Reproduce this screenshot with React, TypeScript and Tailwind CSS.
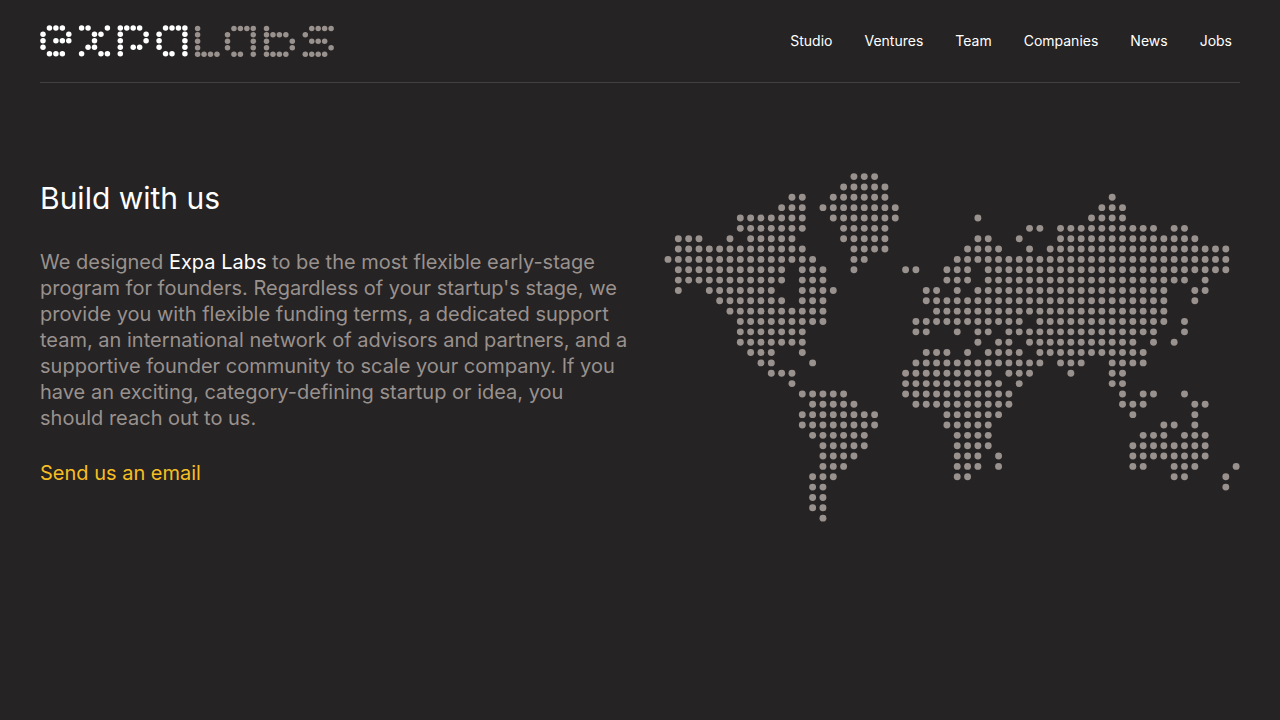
import { Fragment } from "react";

type Range = [number, number];

const MAP_ROWS: Range[][] = [
  [[18, 20]],
  [[17, 21]],
  [[12, 13], [16, 21], [43, 43]],
  [[11, 13], [15, 22], [42, 44]],
  [[7, 13], [16, 22], [30, 30], [41, 44]],
  [[7, 13], [17, 21], [35, 36], [38, 47], [49, 50]],
  [[1, 3], [6, 6], [8, 12], [17, 21], [30, 31], [34, 34], [38, 51]],
  [[1, 13], [18, 21], [29, 32], [35, 35], [37, 54]],
  [[0, 14], [18, 19], [28, 54]],
  [[1, 11], [13, 15], [18, 18], [23, 24], [27, 29], [31, 54]],
  [[1, 11], [13, 15], [27, 29], [31, 50], [52, 52]],
  [[1, 1], [4, 10], [13, 16], [25, 26], [28, 28], [30, 48], [51, 52]],
  [[5, 11], [13, 15], [25, 48], [51, 51]],
  [[6, 15], [26, 48]],
  [[7, 15], [24, 34], [36, 48], [50, 50]],
  [[7, 13], [24, 25], [28, 28], [30, 31], [33, 47], [50, 50]],
  [[7, 13], [30, 30], [32, 33], [35, 45], [47, 47], [49, 49]],
  [[8, 10], [13, 13], [25, 27], [29, 29], [31, 34], [36, 46]],
  [[9, 10], [14, 14], [24, 36], [38, 40], [43, 46]],
  [[10, 12], [23, 31], [33, 35], [39, 39], [43, 44]],
  [[12, 12], [23, 32], [34, 34], [43, 44]],
  [[13, 17], [23, 33], [44, 44], [46, 47], [50, 50]],
  [[14, 18], [24, 33], [44, 46], [51, 52]],
  [[13, 20], [27, 32], [45, 45], [51, 51]],
  [[13, 20], [27, 31], [48, 49], [51, 51]],
  [[14, 19], [28, 31], [46, 48], [50, 52]],
  [[15, 19], [28, 31], [45, 52]],
  [[15, 18], [28, 30], [32, 32], [45, 52]],
  [[15, 17], [28, 30], [32, 32], [45, 46], [49, 51], [55, 55]],
  [[14, 16], [28, 29], [49, 50], [54, 54]],
  [[14, 15], [54, 54]],
  [[14, 15]],
  [[14, 15]],
  [[15, 15]],
];

function WorldMap() {
  return (
    <svg viewBox="0 0 576 350" className="w-full fill-[#99918e]" role="img" aria-label="World map">
      {MAP_ROWS.flatMap((row, y) =>
        row.flatMap(([from, to]) =>
          Array.from({ length: to - from + 1 }, (_, i) => (
            <circle key={`${from + i}-${y}`} cx={4 + (from + i) * 10.33} cy={3.6 + y * 10.35} r={3.45} />
          )),
        ),
      )}
    </svg>
  );
}

interface Glyph {
  x: number;
  y: number;
  dots: string[];
  muted?: boolean;
}

const GLYPHS: Glyph[] = [
  { x: 3, y: 2.9, dots: [".ooo.", "o...o", "o.ooo", "o....", ".ooo."] },
  { x: 41.6, y: 2.9, dots: ["oo..o", "..oo.", "..o..", ".oo..", "o..oo"] },
  { x: 80.3, y: 2.9, dots: ["oooo.", "o...o", "o...o", "o.oo.", "o...."] },
  { x: 119.1, y: 2.9, dots: [".oooo", "o...o", "o...o", "o...o", ".oo.o"] },
  { x: 157.6, y: 3.4, dots: ["o", "o", "o", "o", "oooo"], muted: true },
  { x: 187.5, y: 3.4, dots: [".oooo", "o...o", "o...o", "o...o", ".oo.o"], muted: true },
  { x: 226.5, y: 3.4, dots: ["o", "oooo", "o...o", "o...o", "oooo"], muted: true },
  { x: 265.3, y: 3.4, dots: [".oooo", "o", ".ooo", "....o", "oooo"], muted: true },
];

function Logo() {
  return (
    <svg viewBox="0 0 294 32" width="294" height="32" role="img" aria-label="Expa Labs">
      {GLYPHS.map((glyph) => (
        <g key={glyph.x} className={glyph.muted ? "fill-[#99918e]" : "fill-white"}>
          {glyph.dots.flatMap((row, y) =>
            row.split("").map((dot, x) =>
              dot === "o" ? (
                <circle key={`${x}-${y}`} cx={glyph.x + x * 6.45} cy={glyph.y + y * 6.45} r={2.75} />
              ) : null,
            ),
          )}
        </g>
      ))}
    </svg>
  );
}

const LINKS = ["Studio", "Ventures", "Team", "Companies", "News", "Jobs"];

const INTRO = [
  "program for founders. Regardless of your startup's stage, we",
  "provide you with flexible funding terms, a dedicated support",
  "team, an international network of advisors and partners, and a",
  "supportive founder community to scale your company. If you",
  "have an exciting, category-defining startup or idea, you",
  "should reach out to us.",
];

export default function App() {
  return (
    <div className="min-h-screen bg-[#252323] px-10 font-['Inter',sans-serif] text-white">
      <header className="flex items-center justify-between border-b border-[#434040] pt-[25px] pb-[25px]">
        <a href="#" className="block">
          <Logo />
        </a>
        <nav className="flex gap-8 pr-2 text-[14px] leading-5">
          {LINKS.map((label) => (
            <a key={label} href="#">
              {label}
            </a>
          ))}
        </nav>
      </header>
      <main className="grid grid-cols-2 gap-12 pt-[90px]">
        <section className="pt-1">
          <h1 className="text-[30px] leading-[42px]">Build with us</h1>
          <p className="mt-[30px] text-[20px] leading-[26px] text-[#99918e]">
            <span className="xl:block xl:whitespace-nowrap">
              We designed <a href="#" className="text-white">Expa Labs</a> to be the most flexible early-stage
            </span>
            {INTRO.map((line) => (
              <Fragment key={line}>
                {" "}
                <span className="xl:block xl:whitespace-nowrap">{line}</span>
              </Fragment>
            ))}
          </p>
          <a href="#" className="mt-[29px] inline-block text-[20px] leading-[26px] text-[#f6be22]">
            Send us an email
          </a>
        </section>
        <WorldMap />
      </main>
    </div>
  );
}
